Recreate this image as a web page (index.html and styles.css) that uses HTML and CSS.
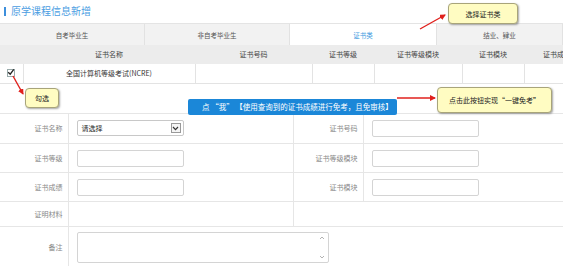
FILE: index.html
```html
<!DOCTYPE html>
<html lang="zh-CN">

<head>
    <meta charset="UTF-8" />
    <title>原学课程信息新增</title>
    <link rel="stylesheet" href="styles.css">
</head>

<body>
    <div class="page">
        <!-- Title -->
        <div class="title"><span class="title-bar"></span>原学课程信息新增</div>

        <!-- Tabs -->
        <div class="tabs">
            <div class="tab">自考毕业生</div>
            <div class="tab">非自考毕业生</div>
            <div class="tab active">证书类</div>
            <div class="tab">结业、肄业</div>
        </div>

        <!-- Certificate grid -->
        <div class="grid-wrap">
            <table class="grid">
                <colgroup>
                    <col class="c-check">
                    <col class="c-name">
                    <col class="c-no">
                    <col class="c-level">
                    <col class="c-lmod">
                    <col class="c-mod">
                    <col class="c-score">
                </colgroup>
                <thead>
                    <tr>
                        <th></th>
                        <th>证书名称</th>
                        <th>证书号码</th>
                        <th>证书等级</th>
                        <th>证书等级模块</th>
                        <th>证书模块</th>
                        <th>证书成绩</th>
                    </tr>
                </thead>
                <tbody>
                    <tr>
                        <td><span class="check">
                                <svg width="8" height="8" viewBox="0 0 8 8">
                                    <path d="M1.2 4.2 L3.2 6.2 L6.8 1.4" fill="none" stroke="#222" stroke-width="1.3" />
                                </svg>
                            </span></td>
                        <td>全国计算机等级考试(NCRE)</td>
                        <td></td>
                        <td></td>
                        <td></td>
                        <td></td>
                        <td></td>
                    </tr>
                </tbody>
            </table>
        </div>

        <!-- One-click button -->
        <div class="action-bar">
            <button class="free-btn">点 “我” 【使用查询到的证书成绩进行免考，且免审核】</button>
        </div>

        <!-- Form -->
        <table class="form">
            <colgroup>
                <col class="f-label">
                <col class="f-value">
                <col class="f-label2">
                <col class="f-value2">
            </colgroup>
            <tr class="row-a">
                <td class="label">证书名称</td>
                <td>
                    <div class="select">请选择
                        <span class="select-arrow">
                            <svg width="7" height="5" viewBox="0 0 7 5">
                                <path d="M1 1 L3.5 3.6 L6 1" fill="none" stroke="#333" stroke-width="1.2" />
                            </svg>
                        </span>
                    </div>
                </td>
                <td class="label">证书号码</td>
                <td><div class="input"></div></td>
            </tr>
            <tr class="row-b">
                <td class="label">证书等级</td>
                <td><div class="input"></div></td>
                <td class="label">证书等级模块</td>
                <td><div class="input"></div></td>
            </tr>
            <tr class="row-b">
                <td class="label">证书成绩</td>
                <td><div class="input"></div></td>
                <td class="label">证书模块</td>
                <td><div class="input"></div></td>
            </tr>
            <tr class="row-c">
                <td class="label">证明材料</td>
                <td></td>
                <td class="blank" colspan="2"></td>
            </tr>
            <tr class="row-d">
                <td class="label">备注</td>
                <td colspan="3">
                    <div class="textarea">
                        <span class="spin">
                            <svg width="6" height="4" viewBox="0 0 6 4">
                                <path d="M1 3 L3 1 L5 3" fill="none" stroke="#aaa" stroke-width="0.9" />
                            </svg>
                            <svg width="6" height="4" viewBox="0 0 6 4">
                                <path d="M1 1 L3 3 L5 1" fill="none" stroke="#aaa" stroke-width="0.9" />
                            </svg>
                        </span>
                    </div>
                </td>
            </tr>
        </table>

        <!-- Guide callouts -->
        <div class="callout callout-tab">选择证书类</div>
        <div class="callout callout-check">勾选</div>
        <div class="callout callout-btn">点击此按钮实现“一键免考”</div>

        <svg class="arrows" width="563" height="266" viewBox="0 0 563 266">
            <defs>
                <marker id="head" markerWidth="6" markerHeight="6" refX="5" refY="3" orient="auto" markerUnits="userSpaceOnUse">
                    <path d="M0 0 L6 3 L0 6 Z" fill="#e0201c" />
                </marker>
            </defs>
            <line x1="420" y1="29" x2="445" y2="15" stroke="#e0201c" stroke-width="1.4" marker-end="url(#head)" />
            <line x1="13" y1="76" x2="23" y2="94" stroke="#e0201c" stroke-width="1.4" marker-end="url(#head)" />
            <line x1="397" y1="98" x2="435" y2="98" stroke="#e0201c" stroke-width="1.4" marker-end="url(#head)" />
        </svg>
    </div>
</body>

</html>
```

FILE: styles.css
```css
/* Reset & Global Styles */
* {
    margin: 0;
    padding: 0;
    box-sizing: border-box;
}

body {
    font-family: 'Noto Sans CJK SC', 'Liberation Sans', sans-serif;
    background: #fff;
    color: #333;
    width: 563px;
    height: 266px;
    overflow: hidden;
}

.page {
    position: relative;
    width: 563px;
    height: 266px;
    overflow: hidden;
}

/* Title */
.title {
    height: 23px;
    display: flex;
    align-items: center;
    gap: 5px;
    padding-left: 4px;
    padding-bottom: 1px;
    font-size: 10px;
    line-height: 12px;
    color: #4a9de2;
}

.title-bar {
    width: 2px;
    height: 9px;
    background: #3d8fdc;
}

/* Tabs */
.tabs {
    height: 22px;
    display: grid;
    grid-template-columns: 145px 145px 147px 1fr;
    border-top: 1px solid #e4e4e4;
    background: #f2f2f2;
}

.tab {
    display: flex;
    align-items: center;
    justify-content: center;
    font-size: 6.5px;
    color: #555;
    border-right: 1px solid #e2e2e2;
}

.tab.active {
    background: #fff;
    color: #3c9ae0;
}

/* Certificate grid */
.grid-wrap {
    width: 563px;
    overflow: hidden;
}

.grid {
    width: 590px;
    table-layout: fixed;
    border-collapse: collapse;
    font-size: 7px;
    line-height: 9px;
}

.c-check { width: 23px; }
.c-name { width: 172px; }
.c-no { width: 117px; }
.c-level { width: 62px; }
.c-lmod { width: 88px; }
.c-mod { width: 62px; }
.c-score { width: 66px; }

.grid th {
    height: 19px;
    background: #ececec;
    font-weight: normal;
    color: #444;
}

.grid td {
    height: 19px;
    border: 1px solid #e3e3e3;
    border-top: none;
    text-align: center;
    color: #333;
}

.grid td:first-child {
    border-left: none;
}

.check {
    display: block;
    width: 8px;
    height: 8px;
    margin-left: 7px;
    border: 1px solid #9aa;
    background: #fff;
    position: relative;
}

.check svg {
    position: absolute;
    left: -1px;
    top: -2px;
}

/* One-click button bar */
.action-bar {
    height: 30px;
    padding: 7px 0 0 188px;
    border-bottom: 1px solid #e6e6e6;
}

.free-btn {
    width: 209px;
    height: 16px;
    border: none;
    border-radius: 2px;
    background: #1b87d8;
    color: #fff;
    font-family: inherit;
    font-size: 7.5px;
    line-height: 16px;
    text-align: left;
    padding-left: 14px;
}

/* Form */
.form {
    width: 563px;
    table-layout: fixed;
    border-collapse: collapse;
    font-size: 7px;
    line-height: 9px;
}

.f-label { width: 68px; }
.f-value { width: 225px; }
.f-label2 { width: 70px; }
.f-value2 { width: 200px; }

.form td {
    border-bottom: 1px solid #e6e6e6;
    border-right: 1px solid #e6e6e6;
    padding-left: 8px;
    vertical-align: middle;
}

.form td.label {
    text-align: right;
    color: #888;
    padding: 0 5px 0 0;
}

.form td.blank,
.form td:last-child {
    border-right: none;
}

.row-a td { height: 30px; }
.row-b td { height: 29px; }
.row-c td { height: 25px; }
.row-d td { height: 42px; }

.input {
    width: 107px;
    height: 17px;
    border: 1px solid #d4d4d4;
    border-radius: 2px;
    background: #fff;
}

.select {
    width: 107px;
    height: 16px;
    border: 1px solid #c8c8c8;
    border-radius: 2px;
    display: flex;
    align-items: center;
    justify-content: space-between;
    padding: 0 2px 0 4px;
    font-size: 7px;
    color: #222;
}

.select-arrow {
    width: 10px;
    height: 10px;
    border: 1px solid #999;
    display: flex;
    align-items: center;
    justify-content: center;
    background: #f4f4f4;
}

.textarea {
    width: 252px;
    height: 31px;
    border: 1px solid #d4d4d4;
    border-radius: 2px;
    display: flex;
    justify-content: flex-end;
    padding: 3px 3px;
}

.spin {
    display: flex;
    flex-direction: column;
    justify-content: space-between;
}

/* Guide callouts */
.callout {
    position: absolute;
    background: #fffcc2;
    border: 1px solid #a8a47a;
    border-radius: 4px;
    box-shadow: 1px 1px 2px rgba(0, 0, 0, 0.35);
    display: flex;
    align-items: center;
    justify-content: center;
    font-size: 7px;
    color: #222;
}

.callout-tab {
    left: 448px;
    top: 3px;
    width: 70px;
    height: 21px;
}

.callout-check {
    left: 25px;
    top: 88px;
    width: 34px;
    height: 20px;
}

.callout-btn {
    left: 437px;
    top: 87px;
    width: 115px;
    height: 26px;
}

.arrows {
    position: absolute;
    left: 0;
    top: 0;
    pointer-events: none;
}
```
